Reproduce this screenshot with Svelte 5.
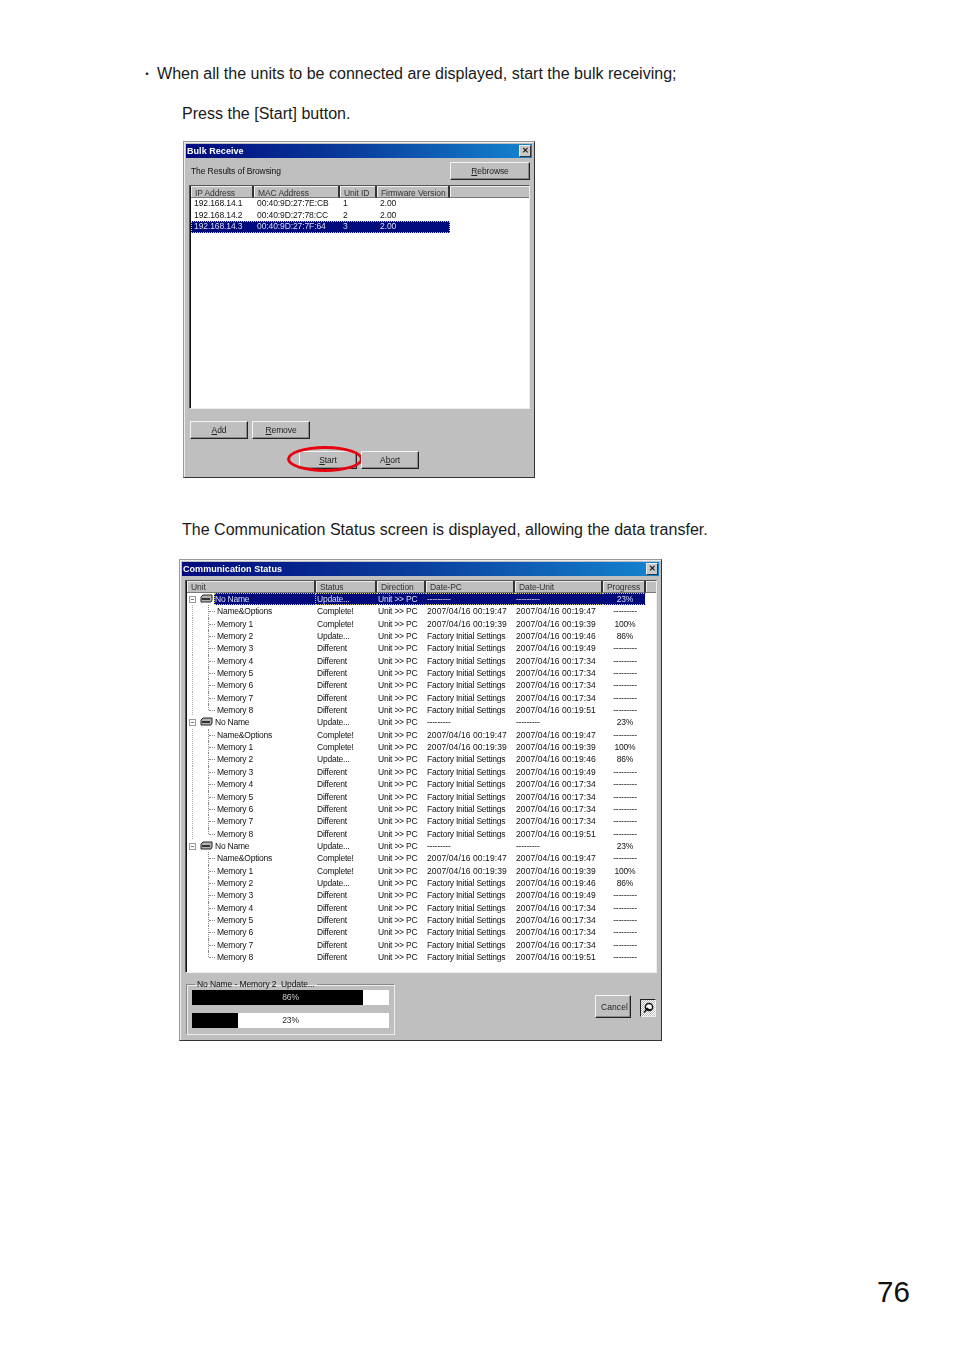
<script>
  const children = [
    ['Name&Options', 'Complete!', '2007/04/16 00:19:47', '2007/04/16 00:19:47', '---------'],
    ['Memory 1', 'Complete!', '2007/04/16 00:19:39', '2007/04/16 00:19:39', '100%'],
    ['Memory 2', 'Update...', 'Factory Initial Settings', '2007/04/16 00:19:46', '86%'],
    ['Memory 3', 'Different', 'Factory Initial Settings', '2007/04/16 00:19:49', '---------'],
    ['Memory 4', 'Different', 'Factory Initial Settings', '2007/04/16 00:17:34', '---------'],
    ['Memory 5', 'Different', 'Factory Initial Settings', '2007/04/16 00:17:34', '---------'],
    ['Memory 6', 'Different', 'Factory Initial Settings', '2007/04/16 00:17:34', '---------'],
    ['Memory 7', 'Different', 'Factory Initial Settings', '2007/04/16 00:17:34', '---------'],
    ['Memory 8', 'Different', 'Factory Initial Settings', '2007/04/16 00:19:51', '---------']
  ];
  const units = [0, 1, 2];
  const browsed = [
    ['192.168.14.1', '00:40:9D:27:7E:CB', '1', '2.00'],
    ['192.168.14.2', '00:40:9D:27:78:CC', '2', '2.00'],
    ['192.168.14.3', '00:40:9D:27:7F:64', '3', '2.00']
  ];
  const isDate = (s) => s.startsWith('2007');
</script>

<div class="page">
  <p class="bullet"><span class="dot">・</span>When all the units to be connected are displayed, start the bulk receiving;</p>
  <p class="para first">Press the [Start] button.</p>

  <div class="win bulk">
    <div class="title"><span>Bulk Receive</span><i class="close">✕</i></div>
    <div class="bulk-top">
      <span>The Results of Browsing</span>
      <button class="btn rebrowse"><u>R</u>ebrowse</button>
    </div>
    <div class="sunken bulk-list">
      <div class="heads">
        <div class="hd" style="width:63px">IP Address</div>
        <div class="hd" style="width:86px">MAC Address</div>
        <div class="hd" style="width:37px">Unit ID</div>
        <div class="hd" style="width:73px">Firmware Version</div>
        <div class="hd rest"></div>
      </div>
      {#each browsed as row, i}
        <div class="brow" class:sel={i === 2}>
          <span style="width:63px">{row[0]}</span>
          <span style="width:86px">{row[1]}</span>
          <span style="width:37px">{row[2]}</span>
          <span style="width:73px">{row[3]}</span>
        </div>
      {/each}
    </div>
    <div class="bulk-btns">
      <button class="btn"><u>A</u>dd</button>
      <button class="btn"><u>R</u>emove</button>
    </div>
    <div class="bulk-run">
      <button class="btn run start">
        <u>S</u>tart
        <span class="ring"></span>
      </button>
      <button class="btn run">A<u>b</u>ort</button>
    </div>
  </div>

  <p class="para second">The Communication Status screen is displayed, allowing the data transfer.</p>

  <div class="win comm">
    <div class="title"><span>Communication Status</span><i class="close">✕</i></div>
    <div class="sunken comm-list">
      <div class="heads">
        <div class="hd" style="width:129px">Unit</div>
        <div class="hd" style="width:61px">Status</div>
        <div class="hd" style="width:49px">Direction</div>
        <div class="hd" style="width:89px">Date-PC</div>
        <div class="hd" style="width:88px">Date-Unit</div>
        <div class="hd" style="width:43px;text-align:center;padding:0">Progress</div>
        <div class="hd rest"></div>
      </div>
      {#each units as u}
        <div class="crow group" class:sel={u === 0}>
          <div class="unit">
            <span class="minus"></span>
            <svg class="disk" width="13" height="9" viewBox="0 0 13 9">
              <path d="M1 3 L3 1 H12 V6 L11 8 H1 Z" fill="#b4b4b4" stroke="#222" stroke-width="1" />
              <path d="M2 4 H10 V6 H2 Z" fill="#333" />
            </svg>
            <span class="uname">No Name</span>
          </div>
          <span class="c status">Update...</span>
          <span class="c dir">Unit &gt;&gt; PC</span>
          <span class="c pc">---------</span>
          <span class="c du">---------</span>
          <span class="c pr">23%</span>
        </div>
        {#each children as row, i}
          <div class="crow">
            <div class="unit child" class:more={u < 2} class:last={i === children.length - 1}>
              <span class="cname">{row[0]}</span>
            </div>
            <span class="c status">{row[1]}</span>
            <span class="c dir">Unit &gt;&gt; PC</span>
            <span class="c pc" class:date={isDate(row[2])}>{row[2]}</span>
            <span class="c du date">{row[3]}</span>
            <span class="c pr">{row[4]}</span>
          </div>
        {/each}
      {/each}
    </div>
    <div class="comm-foot">
      <fieldset class="prog">
        <legend>No Name - Memory 2  Update...</legend>
        <div class="bar"><div class="fill" style="width:86.8%"></div><span>86%</span></div>
        <div class="bar"><div class="fill" style="width:23.4%"></div><span>23%</span></div>
      </fieldset>
      <button class="btn cancel">Cancel</button>
      <div class="pin">
        <svg width="12" height="12" viewBox="0 0 12 12">
          <circle cx="7" cy="5" r="3.6" fill="#fff" stroke="#111" stroke-width="1.5" />
          <path d="M5 7 L2 10.5" stroke="#111" stroke-width="1.5" />
          <path d="M4.5 6 A3.6 3.6 0 0 0 9.5 7.5" stroke="#111" stroke-width="2" fill="none" />
        </svg>
      </div>
    </div>
  </div>

  <div class="pageno">76</div>
</div>

<style>
  :global(body) {
    margin: 0;
    background: #fff;
  }

  .page {
    position: relative;
    width: 954px;
    height: 1351px;
    box-sizing: border-box;
    padding-top: 64px;
    font-family: "Liberation Sans", Arial, sans-serif;
    color: #1a1a1a;
    overflow: hidden;
  }

  p {
    margin: 0;
    font-size: 16.04px;
    line-height: 18px;
  }

  .bullet {
    padding-left: 145px;
  }

  .dot {
    display: inline-block;
    width: 12px;
    font-size: 12px;
    font-family: "Noto Sans CJK JP", sans-serif;
    margin-left: -4px;
    margin-right: 4px;
  }

  .para {
    padding-left: 182px;
  }

  .first {
    margin-top: 21px;
  }

  .second {
    margin-top: 42px;
  }

  .win {
    box-sizing: border-box;
    background: #bfbfbf;
    border: 1px solid #333;
    border-top-color: #999;
    border-left-color: #999;
    padding: 2px;
    box-shadow: inset 1px 1px 0 #eee;
    font-size: 8.5px;
    letter-spacing: -0.1px;
    color: #111;
    filter: blur(0.25px);
  }

  .bulk {
    width: 352px;
    height: 337px;
    margin: 19px 0 0 183px;
  }

  .comm {
    width: 483px;
    height: 482px;
    margin: 21px 0 0 179px;
  }

  .title {
    height: 14px;
    background: linear-gradient(90deg, #000a7c 0%, #0a3f9e 50%, #1484d0 100%);
    color: #fff;
    font-weight: bold;
    font-size: 9px;
    line-height: 14px;
    padding: 0 1px;
    display: flex;
    justify-content: space-between;
    align-items: center;
    letter-spacing: 0.05px;
  }

  .close {
    width: 10px;
    height: 10px;
    background: #c8c8c8;
    border: 1px solid;
    border-color: #eee #333 #333 #eee;
    color: #111;
    font-style: normal;
    font-size: 8px;
    line-height: 10px;
    text-align: center;
    letter-spacing: 0;
  }

  .btn {
    box-sizing: border-box;
    background: #bfbfbf;
    border: 1px solid;
    border-color: #f4f4f4 #222 #222 #f4f4f4;
    box-shadow: inset -1px -1px 0 #888;
    font: inherit;
    letter-spacing: inherit;
    color: #222;
    padding: 0;
    width: 58px;
    height: 18px;
  }

  .bulk-top {
    display: flex;
    justify-content: space-between;
    align-items: center;
    padding: 4px 2px 0 5px;
    height: 18px;
  }

  .rebrowse {
    width: 80px;
    height: 18px;
  }

  .sunken {
    background: #fff;
    border: 1px solid;
    border-color: #555 #eee #eee #555;
    box-shadow: inset 1px 0 0 #111, inset 0 1px 0 #888;
    box-sizing: border-box;
  }

  .bulk-list {
    margin: 5px 2px 0 3px;
    height: 224px;
  }

  .bulk-list .hd {
    line-height: 14px;
  }

  .heads {
    display: flex;
    height: 12px;
    margin-left: 1px;
  }

  .hd {
    box-sizing: border-box;
    background: #bfbfbf;
    border-right: 2px solid #333;
    border-bottom: 1px solid #777;
    box-shadow: inset 1px 1px 0 #eee;
    padding-left: 4px;
    line-height: 12px;
    white-space: nowrap;
    color: #333;
    overflow: hidden;
  }

  .hd.rest {
    flex: 1;
    border-right: 0;
  }

  .brow {
    display: flex;
    height: 11.5px;
    line-height: 11.5px;
    width: 259px;
    margin-left: 1px;
    box-sizing: border-box;
  }

  .brow span {
    padding-left: 3px;
    box-sizing: border-box;
    white-space: nowrap;
  }

  .brow.sel {
    background: #000a7c;
    color: #dde;
    outline: 1px dotted #d8d060;
    outline-offset: -1px;
  }

  .bulk-btns {
    display: flex;
    gap: 4px;
    margin: 12px 0 0 4px;
  }

  .bulk-run {
    display: flex;
    gap: 4px;
    margin: 12px 0 0 113px;
  }

  .run {
    position: relative;
  }

  .ring {
    position: absolute;
    left: -13px;
    top: -6px;
    width: 70px;
    height: 20px;
    border: 3px solid #e8000f;
    border-radius: 50%;
  }

  .comm-list {
    margin: 4px 2px 0 3px;
    height: 393px;
  }

  .crow {
    display: flex;
    height: 12.35px;
    line-height: 12.35px;
    margin-left: 1px;
    white-space: nowrap;
    width: 458px;
    letter-spacing: -0.22px;
  }

  .crow .unit {
    width: 129px;
    flex: none;
    position: relative;
    height: 100%;
  }

  .minus {
    position: absolute;
    left: 2px;
    top: 3px;
    width: 5px;
    height: 5px;
    border: 1px solid #999;
    background: linear-gradient(#777, #777) center / 3px 1px no-repeat #fff;
  }

  .disk {
    position: absolute;
    left: 13px;
    top: 1px;
  }

  .uname {
    position: absolute;
    left: 27px;
    right: 0;
    padding-left: 1px;
  }

  .sel .uname {
    outline: 1px dotted #d8d060;
    outline-offset: -1px;
  }

  .child::before {
    content: "";
    position: absolute;
    left: 21px;
    top: 0;
    bottom: 0;
    border-left: 1px dotted #888;
  }

  .child::after {
    content: "";
    position: absolute;
    left: 22px;
    top: 6px;
    width: 6px;
    border-top: 1px dotted #888;
  }

  .child.last::before {
    bottom: 6px;
  }

  .child.more {
    background: linear-gradient(#aaa 50%, transparent 50%) 5px 0 / 1px 2px repeat-y;
  }

  .cname {
    position: absolute;
    left: 30px;
  }

  .c {
    box-sizing: border-box;
    flex: none;
    padding-left: 1px;
  }

  .date {
    letter-spacing: 0.1px;
  }

  .status {
    width: 61px;
  }

  .dir {
    width: 49px;
  }

  .pc {
    width: 89px;
  }

  .du {
    width: 88px;
  }

  .pr {
    width: 43px;
    text-align: center;
  }

  .crow.sel {
    background: linear-gradient(#000a7c, #000a7c) 27px 0 no-repeat;
  }

  .crow.sel .c,
  .crow.sel .uname {
    color: #dde;
  }

  .crow.sel .c {
    border-top: 1px dotted #d8d060;
    border-bottom: 1px dotted #d8d060;
    line-height: 10.35px;
  }

  .comm-foot {
    display: flex;
    align-items: flex-start;
    padding: 0 2px 0 4px;
  }

  .prog {
    box-sizing: border-box;
    width: 209px;
    height: 55px;
    margin: 7px 0 0 0;
    padding: 2px 5px 0;
    border: 1px solid;
    border-color: #888 #eee #eee #888;
    box-shadow: 1px 1px 0 #eee inset;
    min-inline-size: 0;
  }

  legend {
    padding: 0 2px;
    margin-left: 3px;
    line-height: 8px;
    white-space: pre;
  }

  .bar {
    position: relative;
    height: 15px;
    background: #fff;
    margin-bottom: 8px;
    width: 197px;
    text-align: center;
    line-height: 15px;
    color: #333;
  }

  .fill {
    position: absolute;
    left: 0;
    top: 0;
    bottom: 0;
    background: #000;
  }

  .bar span {
    position: relative;
    mix-blend-mode: difference;
    color: #ccc;
  }

  .cancel {
    width: 36px;
    height: 23px;
    margin: 22px 0 0 200px;
    padding-left: 3px;
    letter-spacing: 0.1px;
  }

  .pin {
    box-sizing: border-box;
    width: 16px;
    height: 18px;
    margin: 26px 0 0 9px;
    background: repeating-conic-gradient(#fff 0 25%, #bbb 0 50%) 0 0 / 2px 2px;
    border: 1px solid;
    border-color: #222 #eee #eee #222;
    display: flex;
    align-items: center;
    justify-content: center;
  }

  .pageno {
    position: absolute;
    left: 877px;
    top: 1275px;
    font-size: 29.5px;
    line-height: 34px;
    color: #111;
  }
</style>
